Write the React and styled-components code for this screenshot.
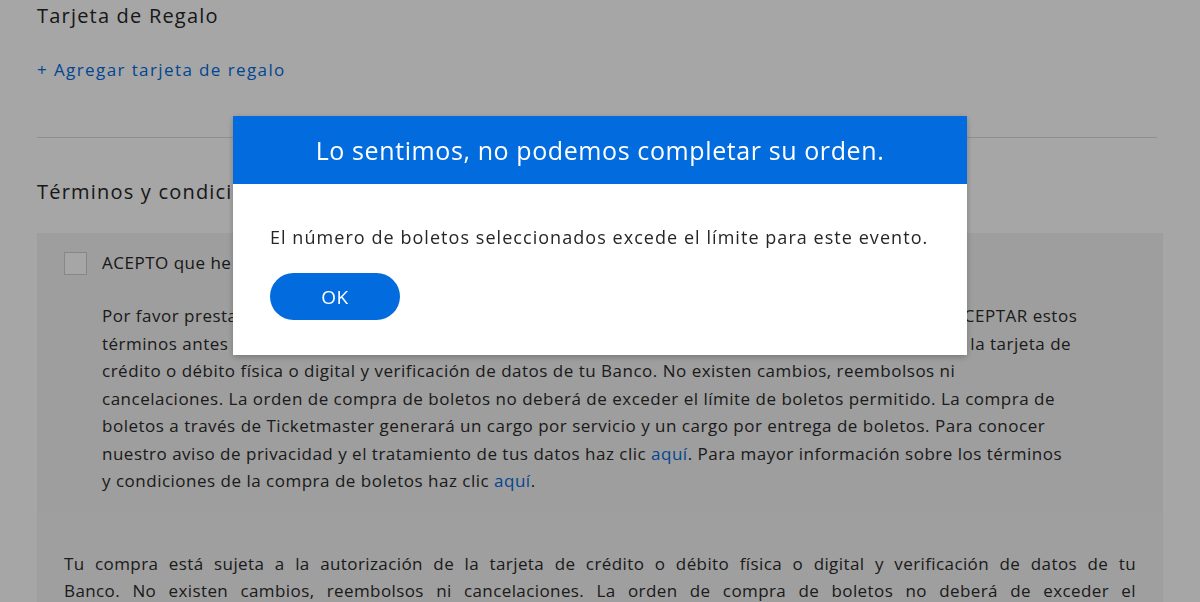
import React from "react";
import styled, { createGlobalStyle } from "styled-components";

const GlobalStyle = createGlobalStyle`
  html, body {
    margin: 0;
    padding: 0;
    background: #ffffff;
    overflow: hidden;
  }
  body {
    font-family: "Open Sans", "Liberation Sans", sans-serif;
    color: #262626;
  }
`;

const Page = styled.main`
  width: 1200px;
  height: 602px;
  box-sizing: border-box;
  padding: 2px 37px 0 37px;
  overflow: hidden;
`;

const SectionTitle = styled.h2`
  margin: 0;
  font-size: 20px;
  line-height: 28px;
  font-weight: 400;
  letter-spacing: 1.2px;
  color: #262626;
`;

const AddLink = styled.a`
  display: block;
  margin-top: 27px;
  font-size: 17px;
  line-height: 26px;
  font-weight: 500;
  letter-spacing: 1.4px;
  color: #026cdf;
  text-decoration: none;
`;

const Divider = styled.hr`
  margin: 54px 6px 40px 0;
  border: 0;
  border-top: 1px solid #dcdcdc;
`;

const TermsBox = styled.section`
  margin-top: 27px;
  background: #f3f3f3;
  padding: 18px 27px 0 27px;
`;

const CheckRow = styled.label`
  display: flex;
  align-items: center;
  gap: 15px;
  font-size: 17px;
  line-height: 24px;
  font-weight: 500;
  letter-spacing: 0.5px;
`;

const Box = styled.span`
  width: 21px;
  height: 21px;
  border: 1px solid #cfcfcf;
  background: #ffffff;
  flex: none;
`;

const TermsText = styled.div`
  margin: 27px 0 0 38px;
  padding-bottom: 17px;
  font-size: 17px;
  line-height: 27.5px;
  letter-spacing: 0.5px;
  color: #2b2b2b;
`;

const Line = styled.span`
  display: block;
  white-space: nowrap;
  text-align: ${(p) => (p.$justify ? "justify" : "left")};
  text-align-last: ${(p) => (p.$justify ? "justify" : "auto")};
`;

const InlineLink = styled.a`
  color: #026cdf;
  text-decoration: none;
`;

const NoteBlock = styled.div`
  margin: 0 -27px;
  padding: 38px 27px 0 27px;
  background: #f5f5f5;
  font-size: 17px;
  line-height: 27px;
  letter-spacing: 0.4px;
  color: #2b2b2b;
`;

const Overlay = styled.div`
  position: fixed;
  inset: 0;
  background: rgba(0, 0, 0, 0.35);
  display: flex;
  justify-content: center;
  align-items: flex-start;
  padding-top: 116px;
`;

const Dialog = styled.div`
  width: 734px;
  background: #ffffff;
  box-shadow: 0 2px 6px rgba(0, 0, 0, 0.25);
`;

const DialogHeader = styled.header`
  height: 68px;
  background: #026cdf;
  color: #ffffff;
  display: flex;
  align-items: center;
  justify-content: center;
  font-size: 25px;
  font-weight: 400;
  letter-spacing: 0.6px;
`;

const DialogBody = styled.div`
  padding: 40px 30px 35px 37px;
`;

const DialogText = styled.p`
  margin: 0;
  font-size: 18px;
  line-height: 26px;
  letter-spacing: 1.05px;
  white-space: nowrap;
  color: #262626;
`;

const OkButton = styled.button`
  margin-top: 23px;
  width: 130px;
  height: 47px;
  border: 0;
  border-radius: 24px;
  background: #026cdf;
  color: #ffffff;
  font-family: inherit;
  font-size: 19px;
  font-weight: 500;
  letter-spacing: 0.5px;
  cursor: pointer;
`;

const termsLines = [
  ["Por favor presta atención a los términos y condiciones que se presentan a continuación, y selecciona ACEPTAR estos"],
  ["términos antes de continuar con tu compra. Tu compra está sujeta a la autorización y la verificación de la tarjeta de"],
  ["crédito o débito física o digital y verificación de datos de tu Banco. No existen cambios, reembolsos ni"],
  ["cancelaciones. La orden de compra de boletos no deberá de exceder el límite de boletos permitido. La compra de"],
  ["boletos a través de Ticketmaster generará un cargo por servicio y un cargo por entrega de boletos. Para conocer"],
  ["nuestro aviso de privacidad y el tratamiento de tus datos haz clic ", "aquí", ". Para mayor información sobre los términos"],
  ["y condiciones de la compra de boletos haz clic ", "aquí", "."],
];

const noteLines = [
  "Tu compra está sujeta a la autorización de la tarjeta de crédito o débito física o digital y verificación de datos de tu",
  "Banco. No existen cambios, reembolsos ni cancelaciones. La orden de compra de boletos no deberá de exceder el",
  "límite de boletos permitido.",
];

export default function App() {
  return (
    <>
      <GlobalStyle />
      <Page>
        <SectionTitle>Tarjeta de Regalo</SectionTitle>
        <AddLink href="#">+ Agregar tarjeta de regalo</AddLink>
        <Divider />
        <SectionTitle>Términos y condiciones</SectionTitle>
        <TermsBox>
          <CheckRow>
            <Box />
            ACEPTO que he leído y estoy de acuerdo con los términos y condiciones
          </CheckRow>
          <TermsText>
            {termsLines.map(([before, link, after], i) => (
              <Line key={i}>
                {before}
                {link && <InlineLink href="#">{link}</InlineLink>}
                {after}
              </Line>
            ))}
          </TermsText>
          <NoteBlock>
            {noteLines.map((t, i) => (
              <Line key={i} $justify={i < noteLines.length - 1}>
                {t}
              </Line>
            ))}
          </NoteBlock>
        </TermsBox>
      </Page>
      <Overlay>
        <Dialog role="dialog">
          <DialogHeader>Lo sentimos, no podemos completar su orden.</DialogHeader>
          <DialogBody>
            <DialogText>
              El número de boletos seleccionados excede el límite para este evento.
            </DialogText>
            <OkButton>OK</OkButton>
          </DialogBody>
        </Dialog>
      </Overlay>
    </>
  );
}
